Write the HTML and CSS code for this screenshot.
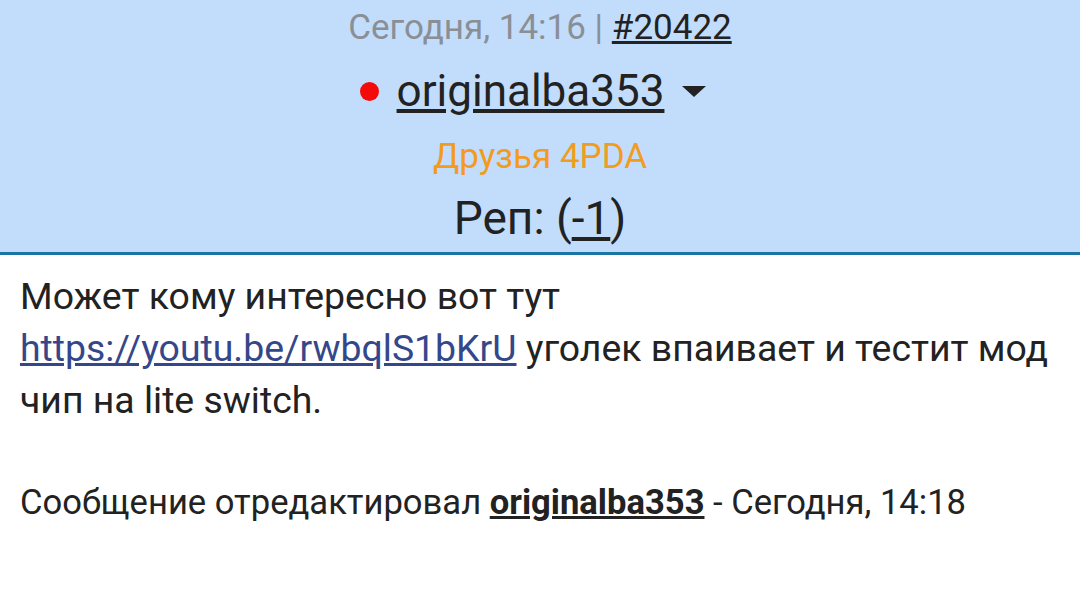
FILE: index.html
```html
<!DOCTYPE html>
<html lang="ru">
<head>
    <meta charset="UTF-8">
    <meta name="viewport" content="width=device-width, initial-scale=1.0">
    <title>Пост #20422</title>
    <link rel="stylesheet" href="styles.css">
</head>
<body>
    <div class="post-header">
        <div class="post-date">Сегодня, 14:16 | <a href="#">#20422</a></div>
        <div class="post-author">
            <span class="status-dot"></span>
            <a href="#" class="author-name">originalba353</a>
            <span class="author-menu"></span>
        </div>
        <div class="author-group">Друзья 4PDA</div>
        <div class="author-rep">Реп: (<a href="#">-1</a>)</div>
    </div>

    <div class="post-body">
        <p class="post-text">
            Может кому интересно вот тут
            <a href="#" class="post-link">https://youtu.be/rwbqlS1bKrU</a> уголек впаивает и тестит мод чип на lite switch.
        </p>
        <p class="post-edit">Сообщение отредактировал <a href="#">originalba353</a> - Сегодня, 14:18</p>
    </div>
</body>
</html>
```

FILE: styles.css
```css
body {
    margin: 0;
    font-family: Roboto, "Noto Sans", sans-serif;
    background-color: #fff;
    color: #222;
}

a {
    color: #222;
}

.post-header {
    background-color: #c2dcfb;
    border-bottom: 3px solid #1a74a6;
    text-align: center;
    padding-top: 8px;
    height: 255px;
    box-sizing: border-box;
}

.post-date {
    font-size: 35px;
    line-height: 40px;
    color: #8a8f96;
}

.post-author {
    display: flex;
    justify-content: center;
    align-items: center;
    gap: 18px;
    margin-top: 19px;
    font-size: 44px;
    line-height: 48px;
}

.status-dot {
    width: 19px;
    height: 19px;
    border-radius: 50%;
    background-color: #f50a0a;
}

.author-menu {
    width: 0;
    height: 0;
    margin-right: 14px;
    border-left: 12px solid transparent;
    border-right: 12px solid transparent;
    border-top: 11px solid #222;
}

.author-group {
    margin-top: 22px;
    font-size: 35px;
    line-height: 40px;
    color: #f29c1f;
}

.author-rep {
    margin-top: 16px;
    font-size: 46px;
    line-height: 50px;
}

.post-body {
    padding: 15px 20px;
}

.post-text {
    margin: 0;
    font-size: 37.4px;
    line-height: 52px;
}

.post-link {
    color: #34478a;
}

.post-edit {
    margin: 56px 0 0;
    font-size: 34.6px;
    line-height: 40px;
}

.post-edit a {
    font-weight: bold;
}
```
